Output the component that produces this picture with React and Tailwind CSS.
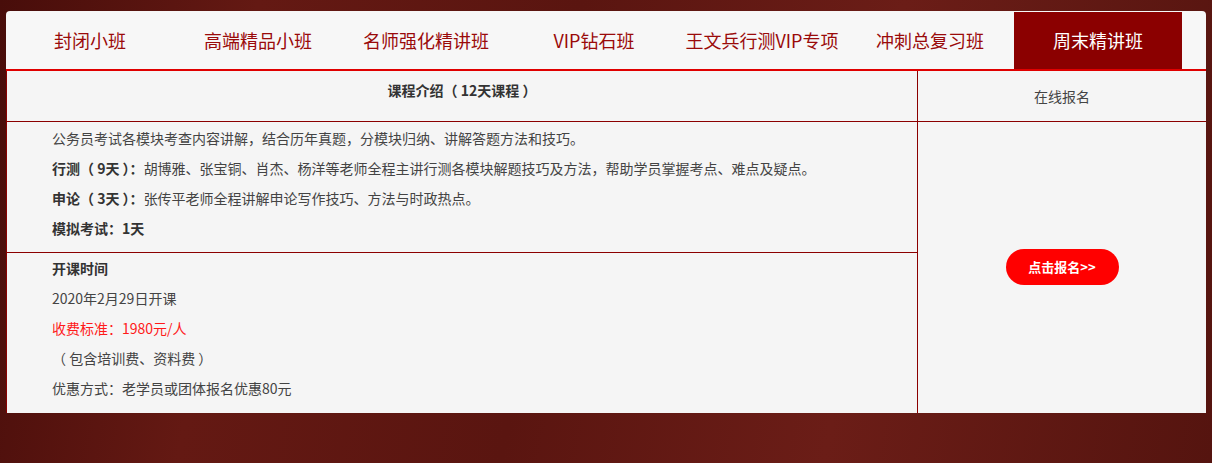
import React from "react";

const tabs = [
  "封闭小班",
  "高端精品小班",
  "名师强化精讲班",
  "VIP钻石班",
  "王文兵行测VIP专项",
  "冲刺总复习班",
  "周末精讲班",
];

export default function App() {
  const active = 6;

  return (
    <div
      className="h-[463px] w-[1212px] overflow-hidden bg-[linear-gradient(100deg,#480d0a_0%,#641913_20%,#5a1510_45%,#6b1d17_70%,#55140f_100%)] pt-[11px] pl-[6px]"
      style={{ fontFamily: '"Noto Sans CJK SC", "Noto Sans", sans-serif' }}
    >
      <div className="w-[1200px]">
        {/* tabs */}
        <div className="flex h-[60px] rounded-t-[4px] bg-[#f7f7f7] border-b-2 border-[#e00000]">
          {tabs.map((t, i) => (
            <div
              key={t}
              className={
                i === active
                  ? "mt-px flex w-[168px] items-center justify-center bg-[#8b0000] text-[18px] text-white"
                  : "flex w-[168px] items-center justify-center text-[18px] text-[#9a0a0a]"
              }
            >
              {t}
            </div>
          ))}
        </div>

        {/* table */}
        <div className="flex h-[342px] border-l border-[#8b0000] bg-[#f5f5f5] text-[14px] text-[#444]">
          <div className="flex w-[911px] flex-col border-r border-[#8b0000]">
            <div className="flex h-[51px] items-center justify-center border-b border-[#8b0000] pb-[11px] font-bold text-[#333]">
              课程介绍（ 12天课程 ）
            </div>
            <div className="h-[131px] border-b border-[#8b0000] pl-[45px] pt-px leading-[30px]">
              <p>公务员考试各模块考查内容讲解，结合历年真题，分模块归纳、讲解答题方法和技巧。</p>
              <p>
                <b className="text-[#333]">行测（ 9天 ）：</b>
                胡博雅、张宝铜、肖杰、杨洋等老师全程主讲行测各模块解题技巧及方法，帮助学员掌握考点、难点及疑点。
              </p>
              <p>
                <b className="text-[#333]">申论（ 3天 ）：</b>
                张传平老师全程讲解申论写作技巧、方法与时政热点。
              </p>
              <p>
                <b className="text-[#333]">模拟考试：1天</b>
              </p>
            </div>
            <div className="pl-[45px] leading-[30px]">
              <p className="font-bold text-[#333]">开课时间</p>
              <p>2020年2月29日开课</p>
              <p className="text-[#ff1a1a]">收费标准：1980元/人</p>
              <p>（ 包含培训费、资料费 ）</p>
              <p>优惠方式：老学员或团体报名优惠80元</p>
            </div>
          </div>
          <div className="flex flex-1 flex-col">
            <div className="flex h-[51px] items-center justify-center border-b border-[#8b0000] text-[#444]">
              在线报名
            </div>
            <div className="flex flex-1 items-center justify-center pb-[2px]">
              <button className="h-[36px] w-[113px] rounded-full bg-[#ff0000] text-[13px] font-bold text-white">
                点击报名&gt;&gt;
              </button>
            </div>
          </div>
        </div>
      </div>
    </div>
  );
}
